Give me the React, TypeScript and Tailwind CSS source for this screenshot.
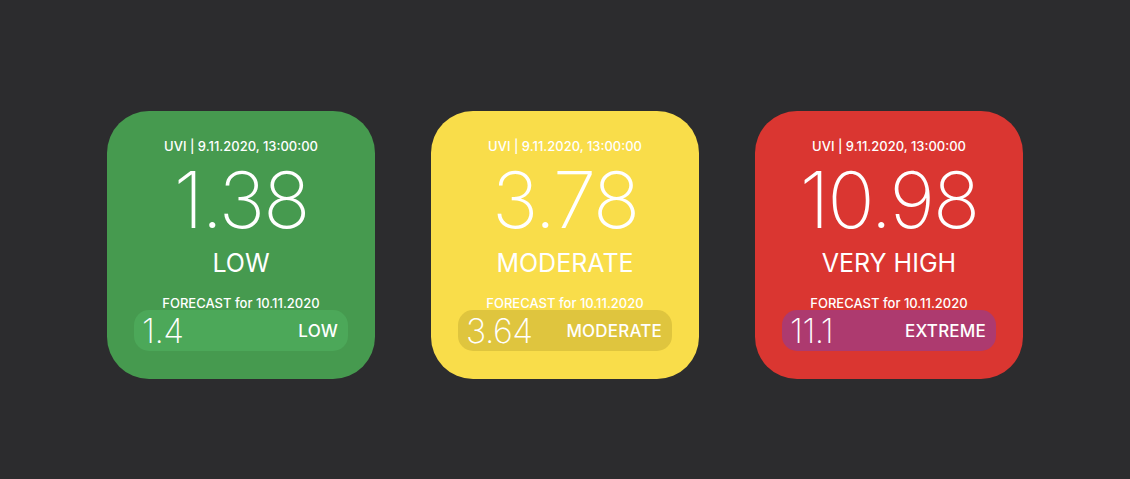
const widgets = [
  {
    value: "1.38",
    level: "LOW",
    forecast: "1.4",
    forecastLevel: "LOW",
    card: "bg-[#469a4f]",
    pill: "bg-[#4ca859]",
  },
  {
    value: "3.78",
    level: "MODERATE",
    forecast: "3.64",
    forecastLevel: "MODERATE",
    card: "bg-[#f9dd4a]",
    pill: "bg-[#dfc53e]",
  },
  {
    value: "10.98",
    level: "VERY HIGH",
    forecast: "11.1",
    forecastLevel: "EXTREME",
    card: "bg-[#da3631]",
    pill: "bg-[#ad3a6f]",
  },
];

export default function App() {
  return (
    <div
      className="w-[1130px] h-[479px] bg-[#2c2c2e] flex justify-center gap-[56px] pt-[111px] text-white"
      style={{ fontFamily: "Inter, 'Noto Sans', sans-serif" }}
    >
      {widgets.map((w) => (
        <div
          key={w.value}
          className={`w-[268px] h-[268px] rounded-[42px] ${w.card} flex flex-col items-center pt-[27px]`}
        >
          {/* header */}
          <div className="text-[13px] leading-[16px] font-medium tracking-[0px]">
            UVI | 9.11.2020, 13:00:00
          </div>
          <div className="mt-[7px] text-[78px] leading-[78px] font-extralight tracking-[-2px]">
            {w.value}
          </div>
          <div className="mt-[9px] text-[25px] leading-[30px] font-normal">
            {w.level}
          </div>
          <div className="mt-[17px] text-[13px] leading-[16px] font-medium tracking-[0px]">
            FORECAST for 10.11.2020
          </div>
          {/* forecast pill */}
          <div
            className={`mt-[-1px] w-[214px] h-[41px] rounded-[15px] ${w.pill} flex items-center justify-between pl-[8px] pr-[10px]`}
          >
            <span className="text-[34px] leading-[34px] font-extralight tracking-[-0.5px]">{w.forecast}</span>
            <span className="text-[17px] leading-[20px] font-medium tracking-[0.2px]">
              {w.forecastLevel}
            </span>
          </div>
        </div>
      ))}
    </div>
  );
}
